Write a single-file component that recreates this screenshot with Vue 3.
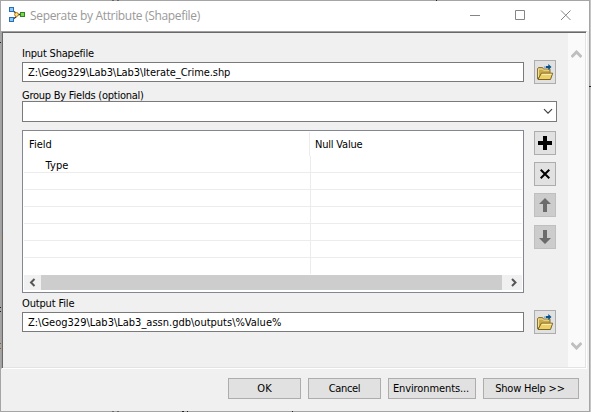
<script setup>
const rows = ['Type', '', '', '', '', '', '']
const fileInputs = {
  input: 'Z:\\Geog329\\Lab3\\Lab3\\Iterate_Crime.shp',
  output: 'Z:\\Geog329\\Lab3\\Lab3_assn.gdb\\outputs\\%Value%',
}
</script>

<template>
  <div class="window">
    <svg class="sprites" width="0" height="0">
      <symbol id="folder" viewBox="0 0 18 17">
        <path d="M1.500 15V4.500l1-1h4l1 1.500h6.500v4" fill="#c9a94a" stroke="#8a7434" />
        <path d="M2.500 13V5h4l1 1.200h5.500" fill="none" stroke="#f3df94" />
        <path d="M2 15.500L5.300 9.200h11.400L14.500 15.500z" fill="#edcf68" stroke="#7b6524" />
        <path d="M5.800 10.300h9.700" stroke="#fff2b4" />
        <path d="M8.500 5V3H12" fill="none" stroke="#8fb4d6" stroke-width="1.300" />
        <path d="M10 2h2.300V0l3.200 3-3.200 3V4H10z" fill="#07508c" />
      </symbol>
    </svg>
    <header class="titlebar">
      <svg class="model" width="17" height="17" viewBox="0 0 17 17">
        <path d="M5 4.500l2.500 2M5 11.500l2.500-2M9 7.500h3" stroke="#333" stroke-width="1.300" />
        <rect x=".500" y=".500" width="4" height="4" fill="#8cc8f4" stroke="#2a70b0" />
        <rect x=".500" y="10.500" width="4" height="4" fill="#8cc8f4" stroke="#2a70b0" />
        <circle cx="7.500" cy="7.500" r="1.900" fill="#ffe87a" stroke="#b5761c" />
        <rect x="11.500" y="5.500" width="4" height="4" fill="#7fd452" stroke="#2b861e" />
      </svg>
      <h1>Seperate by Attribute (Shapefile)</h1>
      <svg class="controls" width="104" height="12" viewBox="0 0 104 12" fill="none" stroke="#858585">
        <path d="M0 5.500h10M45.500 .500h9v9h-9zM91 .500l9.500 9.500M100.500 .500L91 10" />
      </svg>
    </header>
    <main class="client">
      <section class="form">
        <label class="l-input">Input Shapefile</label>
        <div class="file-row">
          <div class="field"><span class="v-input">{{ fileInputs.input }}</span></div>
          <button class="tool"><svg width="18" height="17"><use href="#folder" /></svg></button>
        </div>
        <label class="l-group">Group By Fields (optional)</label>
        <div class="combo">
          <svg width="10" height="7" viewBox="0 0 10 7"><path d="M1 1.200l4 4 4-4" fill="none" stroke="#404040" stroke-width="1.200" /></svg>
        </div>
        <div class="table-row">
          <div class="table">
            <div class="grid">
              <div class="head"><span>Field</span><span class="t-null">Null Value</span></div>
              <div v-for="(row, i) in rows" :key="i" class="line"><span class="t-type">{{ row }}</span></div>
            </div>
            <div class="hscroll">
              <svg width="17" height="15" viewBox="0 0 17 15"><path d="M10.500 4L7 7.500l3.500 3.500" fill="none" stroke="#555" stroke-width="2" /></svg>
              <div class="thumb"></div>
              <svg width="20" height="15" viewBox="0 0 20 15"><path d="M10 4l3.500 3.500L10 11" fill="none" stroke="#555" stroke-width="2" /></svg>
            </div>
          </div>
          <div class="tools">
            <button class="tool"><svg width="14" height="14" viewBox="0 0 14 14"><path d="M5 0h4v5h5v4H9v5H5V9H0V5h5z" /></svg></button>
            <button class="tool"><svg width="10" height="10" viewBox="0 0 10 10"><path d="M.700 .700l8.600 8.600M9.300 .700L.700 9.300" stroke="#000" stroke-width="2" /></svg></button>
            <button class="tool off"><svg width="12" height="14" viewBox="0 0 12 14"><path d="M6 0l6 6H8v8H4V6H0z" fill="#6b6b6b" /></svg></button>
            <button class="tool off last"><svg width="12" height="14" viewBox="0 0 12 14"><path d="M6 14l6-6H8V0H4v8H0z" fill="#6b6b6b" /></svg></button>
          </div>
        </div>
        <label class="l-output">Output File</label>
        <div class="file-row">
          <div class="field"><span>{{ fileInputs.output }}</span></div>
          <button class="tool"><svg width="18" height="17"><use href="#folder" /></svg></button>
        </div>
      </section>
      <aside class="vscroll">
        <svg width="11" height="9" viewBox="0 0 11 9"><path d="M.500 7l5-5 5 5" fill="none" stroke="#bfbfbf" stroke-width="3" /></svg>
        <svg width="11" height="9" viewBox="0 0 11 9"><path d="M.500 2l5 5 5-5" fill="none" stroke="#bfbfbf" stroke-width="3" /></svg>
      </aside>
    </main>
    <footer class="actions">
      <button>OK</button>
      <button class="cancel">Cancel</button>
      <button class="env">Environments...</button>
      <button class="help">Show Help &gt;&gt;</button>
    </footer>
    <svg class="behind" width="591" height="412" viewBox="0 0 591 412">
      <path d="M0 42.500h1M589 86.500h2M436 .500h1M0 307.500h1M0 311.500h1M182 411.500h2M187 411.500h1M292 411.500h1" stroke="#222" />
      <path d="M112 .500h2M117 .500h2M112 411.500h2M117 411.500h2" stroke="#666" />
      <path d="M0 238.500h1" stroke="#c9a850" />
      <path d="M0 343.500h1M0 348.500h1" stroke="#9a5a20" />
    </svg>
  </div>
</template>

<style>
body { margin: 0; background: #c5c5c5; overflow: hidden; }
</style>

<style scoped>
* { box-sizing: border-box; }
.window { position: relative; width: 590px; height: 412px; border: 1px solid #a5a5a5; background: #f0f0f0; display: flex; flex-direction: column; font: 11px/13px "DejaVu Sans Condensed", "DejaVu Sans", sans-serif; color: #000; }
.sprites { position: absolute; }
.behind { position: absolute; left: -1px; top: -1px; pointer-events: none; }
.titlebar { height: 30px; background: #fff; display: flex; align-items: flex-start; flex: none; }
.model { margin: 6px 0 0 8px; flex: none; }
h1 { font: 12px/16px "Open Sans", sans-serif; letter-spacing: -.34px; color: #999; margin: 7px 0 0 4px; white-space: nowrap; width: 190px; }
.controls { margin: 9px 0 0 250px; flex: none; }
.client { height: 338px; margin-right: 2px; border-top: 1px solid #a0a0a0; border-left: 1px solid #a0a0a0; border-right: 1px solid #fff; border-bottom: 1px solid #fff; display: flex; box-shadow: inset 1px 1px #696969, inset -1px -1px #e3e3e3; flex: none; }
.form { width: 566px; padding: 15px 0 0 20px; flex: none; }
label { display: block; height: 13px; white-space: nowrap; }
span { white-space: nowrap; }
.file-row { display: flex; align-items: center; gap: 10px; height: 24px; }
.l-input { letter-spacing: -.2px; }
.v-input { letter-spacing: -.07px; }
.field { width: 502px; height: 20px; border: 1px solid #7a7a7a; background: #fff; padding: 3px 4px 0 5px; }
.tool { width: 22px; height: 24px; padding: 0; border: 1px solid #adadad; background: #e1e1e1; display: flex; align-items: center; justify-content: center; flex: none; }
.l-group { height: 12px; margin-top: 5px; letter-spacing: -.24px; }
.combo { width: 535px; height: 21px; border: 1px solid #7a7a7a; background: #fff; display: flex; justify-content: flex-end; align-items: center; padding-right: 3px; }
.table-row { display: flex; gap: 10px; margin-top: 8px; height: 163px; }
.table { width: 502px; height: 163px; border: 1px solid #828790; background: #fff; padding: 1px; }
.grid { height: 143px; overflow: hidden; background: linear-gradient(#ececec, #ececec) 285px 0 / 1px 24px no-repeat, linear-gradient(#ececec, #ececec) 286px 24px / 1px 118px no-repeat; }
.head { height: 24px; padding: 6px 0 0 5px; display: grid; grid-template-columns: 286px auto; }
.t-null { letter-spacing: -.2px; }
.t-type { letter-spacing: .1px; }
.line { height: 17px; border-bottom: 1px solid #ececec; padding: 3px 0 0 21.500px; }
.line:last-child { border: 0; }
.hscroll { height: 15px; background: #f0f0f0; display: flex; }
.thumb { width: 461px; background: #cdcdcd; }
.tools { display: flex; flex-direction: column; gap: 7px; padding-top: 1px; }
.off { background: #ccc; border-color: #bfbfbf; }
.last { margin-top: 1px; }
.l-output { margin-top: 4px; letter-spacing: -.15px; }
.vscroll { width: 17px; margin: 1px 0; background: #fafafa; display: flex; flex-direction: column; justify-content: space-between; align-items: center; padding: 17px 0 17px; }
.actions { display: flex; gap: 7px; padding: 9px 0 0 227px; }
.actions button { width: 73px; height: 21px; padding: 0; border: 1px solid #adadad; background: #e1e1e1; font: inherit; color: #000; white-space: nowrap; }
.actions .cancel { letter-spacing: -.35px; }
.actions .env { width: 88px; letter-spacing: -.1px; padding-right: 2px; }
.actions .help { width: 96px; letter-spacing: -.22px; padding-right: 2px; }
</style>
